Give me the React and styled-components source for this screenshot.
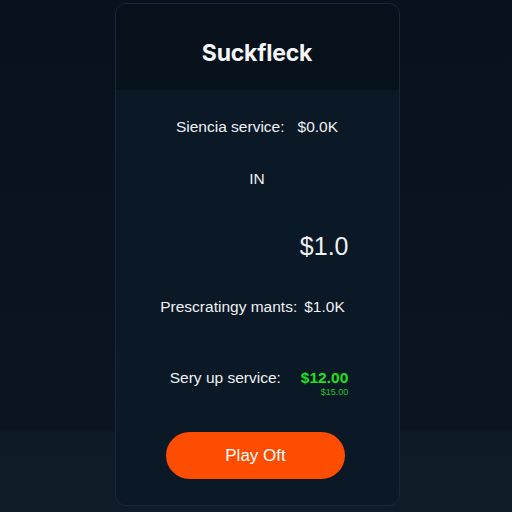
import React from 'react'
import styled, { createGlobalStyle } from 'styled-components'

const Global = createGlobalStyle`
  html, body {
    margin: 0;
    padding: 0;
  }
  body {
    width: 512px;
    height: 512px;
    overflow: hidden;
    background: linear-gradient(#08121e 0, #0a1521 431px, #0e1a26 432px, #0f1b27 512px);
    font-family: 'Liberation Sans', Arial, sans-serif;
  }
`

const Page = styled.div`
  display: flex;
  justify-content: center;
  padding: 3px 0 0 2px;
`

const Card = styled.div`
  width: 285px;
  height: 503px;
  box-sizing: border-box;
  border: 1px solid #1a2738;
  border-radius: 11px;
  background: #0b1826;
  overflow: hidden;
  display: flex;
  flex-direction: column;
`

const Header = styled.div`
  height: 86px;
  background: #07111c;
  display: flex;
  align-items: center;
  justify-content: center;
  padding-top: 12px;
  box-sizing: border-box;
`

const Title = styled.h1`
  margin: 0;
  font-family: Inter, 'Noto Sans', sans-serif;
  font-weight: 700;
  font-size: 23px;
  color: #f4f6f8;
  letter-spacing: -0.2px;
`

const Body = styled.div`
  flex: 1;
  display: flex;
  flex-direction: column;
  align-items: center;
`

const Row = styled.div`
  display: flex;
  align-items: flex-start;
  justify-content: center;
  gap: ${p => p.$gap || 12}px;
  margin-top: ${p => p.$top}px;
  margin-left: ${p => p.$shift || 0}px;
  align-self: ${p => (p.$end ? 'flex-end' : 'center')};
  padding-right: ${p => p.$right || 0}px;
  color: #eef1f4;
  font-size: ${p => p.$size || 15.5}px;
  line-height: 1.2;
`

const Value = styled.span`
  color: ${p => (p.$green ? '#1fe01f' : '#eef1f4')};
  font-weight: ${p => (p.$green ? 700 : 400)};
`

const Stack = styled.div`
  display: flex;
  flex-direction: column;
  align-items: flex-end;
`

const Small = styled.span`
  font-size: 9px;
  color: #22c42a;
`

const Button = styled.button`
  margin-top: 34px;
  width: 179px;
  height: 47px;
  border: none;
  border-radius: 24px;
  background: #ff4d00;
  color: #ffffff;
  font-family: 'Liberation Sans', Arial, sans-serif;
  font-size: 17px;
  margin-left: -3px;
`

const App = () => {
  return (
    <Page>
      <Global />
      <Card>
        <Header>
          <Title>Suckfleck</Title>
        </Header>
        <Body>
          <Row $top={28} $gap={13}>
            <span>Siencia service:</span>
            <Value>$0.0K</Value>
          </Row>
          <Row $top={33}>
            <span>IN</span>
          </Row>
          <Row $top={43} $size={25} $end $right={50}>
            <Value>$1.0</Value>
          </Row>
          <Row $top={37} $gap={7} $shift={-9}>
            <span>Prescratingy mants:</span>
            <Value>$1.0K</Value>
          </Row>
          <Row $top={52} $gap={20} $shift={4}>
            <span>Sery up service:</span>
            <Stack>
              <Value $green>$12.00</Value>
              <Small>$15.00</Small>
            </Stack>
          </Row>
          <Button>Play Oft</Button>
        </Body>
      </Card>
    </Page>
  )
}

export default App
